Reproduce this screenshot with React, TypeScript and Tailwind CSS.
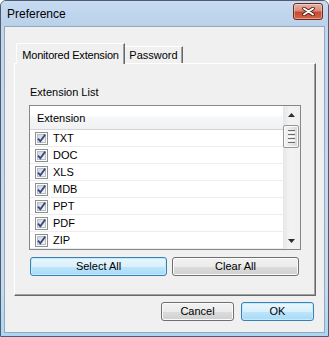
import React from "react";

const extensions = ["TXT", "DOC", "XLS", "MDB", "PPT", "PDF", "ZIP"];

function CheckBox() {
  return (
    <svg width="13" height="13" viewBox="0 0 13 13" className="shrink-0">
      <defs>
        <linearGradient id="cbFill" x1="0" y1="0" x2="1" y2="1">
          <stop offset="0" stopColor="#cfd4db" />
          <stop offset="1" stopColor="#f6f7f8" />
        </linearGradient>
      </defs>
      <rect x="0.5" y="0.5" width="12" height="12" fill="#fdfdfd" stroke="#8e8f8f" />
      <rect x="2.5" y="2.5" width="8" height="8" fill="url(#cbFill)" stroke="#b8bcc3" />
      <path d="M3 6.6 L5.3 9.2 L10.2 2.6" fill="none" stroke="#3a4a80" strokeWidth="1.8" />
    </svg>
  );
}

function CloseButton() {
  return (
    <div className="mb-[4px] ml-auto flex h-[17px] w-[30px] items-center justify-center rounded-[3px] border border-[#6f2a1f] bg-[linear-gradient(to_bottom,#e8b3a6_0%,#d98a77_45%,#c8462f_55%,#d4694c_100%)] shadow-[inset_0_0_0_1px_rgba(255,255,255,0.35)]">
      <svg width="13" height="9" viewBox="0 0 13 9">
        <path d="M2 1.5 L11 7.5 M11 1.5 L2 7.5" stroke="#4a1a12" strokeWidth="3.6" strokeLinecap="round" />
        <path d="M2 1.5 L11 7.5 M11 1.5 L2 7.5" stroke="#ffffff" strokeWidth="2" strokeLinecap="round" />
      </svg>
    </div>
  );
}

function ArrowUp() {
  return (
    <svg width="7" height="4" viewBox="0 0 7 4">
      <path d="M0 4 L3.5 0 L7 4 Z" fill="#2e2e2e" />
    </svg>
  );
}

function ArrowDown() {
  return (
    <svg width="7" height="4" viewBox="0 0 7 4">
      <path d="M0 0 L3.5 4 L7 0 Z" fill="#2e2e2e" />
    </svg>
  );
}

function Button({ label, primary, className }: { label: string; primary?: boolean; className: string }) {
  return (
    <button
      type="button"
      className={
        primary
          ? `flex items-center justify-center rounded-[3px] border border-[#3c7fb1] bg-[linear-gradient(to_bottom,#eaf6fd_0%,#d9f0fc_50%,#bee6fd_51%,#a7d9f5_100%)] shadow-[inset_0_0_0_1px_#c2ecfd] text-[11px] leading-none ${className}`
          : `flex items-center justify-center rounded-[3px] border border-[#707070] bg-[linear-gradient(to_bottom,#f2f2f2_0%,#ebebeb_50%,#dddddd_51%,#cfcfcf_100%)] shadow-[inset_0_0_0_1px_#fbfbfb] text-[11px] leading-none ${className}`
      }
    >
      {label}
    </button>
  );
}

export default function App() {
  return (
    <div className="h-[337px] w-[329px] font-['Liberation_Sans',Arial,sans-serif] text-[11px] text-black">
      <div className="flex h-full flex-col overflow-hidden rounded-t-[6px] border border-[#4d5c70] bg-[linear-gradient(to_bottom,#c0d6ee,#c7dbf0_85%,#a9d8f3)]">
        {/* title bar */}
        <div className="flex h-[25px] shrink-0 items-center pl-[6px] pr-[5px] bg-[linear-gradient(to_bottom,#c6dbf1,#bad1ea)]">
          <span className="text-[12px]">Preference</span>
          <CloseButton />
        </div>

        {/* client */}
        <div className="flex min-h-0 flex-1 px-[3px] pb-[3px]">
          <div className="flex flex-1 flex-col border border-[#95a7bd] bg-[#f0f0f0] pl-[9px] pt-[16px]">
            {/* tabs */}
            <div className="flex items-end">
              <div className="relative z-10 -mb-[1px] ml-[2px] flex h-[21px] w-[109px] items-start justify-center rounded-tl-[2px] border-l border-t border-r border-l-white border-t-white border-r-[#696969] bg-[#f0f0f0] pt-[3px] tracking-[-0.2px] shadow-[inset_-1px_0_0_#a0a0a0]">
                Monitored Extension
              </div>
              <div className="flex h-[17px] w-[58px] items-start justify-center border-t border-r border-t-white border-r-[#696969] pt-[0px] shadow-[inset_-1px_0_0_#a0a0a0]">
                Password
              </div>
            </div>

            {/* panel */}
            <div className="flex h-[233px] w-[302px] flex-col border border-l-white border-t-white border-r-[#696969] border-b-[#696969] bg-[#f0f0f0] pl-[14px] pt-[22px] shadow-[inset_-1px_-1px_0_#a0a0a0]">
              <div className="pl-[1px] leading-[13px]">Extension List</div>

              <div className="mt-[6px] flex h-[145px] w-[272px] border border-[#828790] bg-white">
                <div className="flex w-[253px] flex-col">
                  <div className="flex h-[24px] shrink-0 items-center border-b border-[#d5d5d5] bg-[linear-gradient(to_bottom,#ffffff_0%,#ffffff_45%,#f6f7f8_46%,#eff1f3_100%)] pl-[7px] pt-[2px]">
                    Extension
                  </div>
                  {extensions.map((ext) => (
                    <div
                      key={ext}
                      className="flex h-[17px] shrink-0 items-center gap-[5px] border-b border-[#ededed] pl-[5px]"
                    >
                      <CheckBox />
                      <span className="leading-none">{ext}</span>
                    </div>
                  ))}
                </div>

                {/* scrollbar */}
                <div className="flex w-[17px] flex-col bg-[linear-gradient(to_right,#e6e6e6,#f3f3f3_40%,#f0f0f0)]">
                  <div className="flex h-[17px] shrink-0 items-center justify-center">
                    <ArrowUp />
                  </div>
                  <div className="mr-[1px] mt-[2px] flex h-[23px] shrink-0 flex-col items-center justify-center gap-[1px] rounded-[2px] border border-[#979797] bg-[linear-gradient(to_right,#f4f4f4,#e6e6e6_55%,#d4d4d4)] shadow-[inset_0_0_0_1px_#fafafa]">
                    <div className="h-px w-[7px] bg-[#707070]" />
                    <div className="h-px w-[7px] bg-white" />
                    <div className="h-px w-[7px] bg-[#707070]" />
                    <div className="h-px w-[7px] bg-white" />
                    <div className="h-px w-[7px] bg-[#707070]" />
                    <div className="h-px w-[7px] bg-white" />
                    <div className="h-px w-[7px] bg-[#707070]" />
                  </div>
                  <div className="flex-1" />
                  <div className="flex h-[17px] shrink-0 items-center justify-center">
                    <ArrowDown />
                  </div>
                </div>
              </div>

              <div className="mt-[7px] flex gap-[5px] pl-[1px]">
                <Button label="Select All" primary className="h-[19px] w-[137px]" />
                <Button label="Clear All" className="h-[19px] w-[127px]" />
              </div>
            </div>

            {/* dialog buttons */}
            <div className="mt-[6px] flex justify-end gap-[7px] pr-[10px]">
              <Button label="Cancel" className="h-[19px] w-[73px]" />
              <Button label="OK" primary className="h-[19px] w-[73px]" />
            </div>
          </div>
        </div>
      </div>
    </div>
  );
}
